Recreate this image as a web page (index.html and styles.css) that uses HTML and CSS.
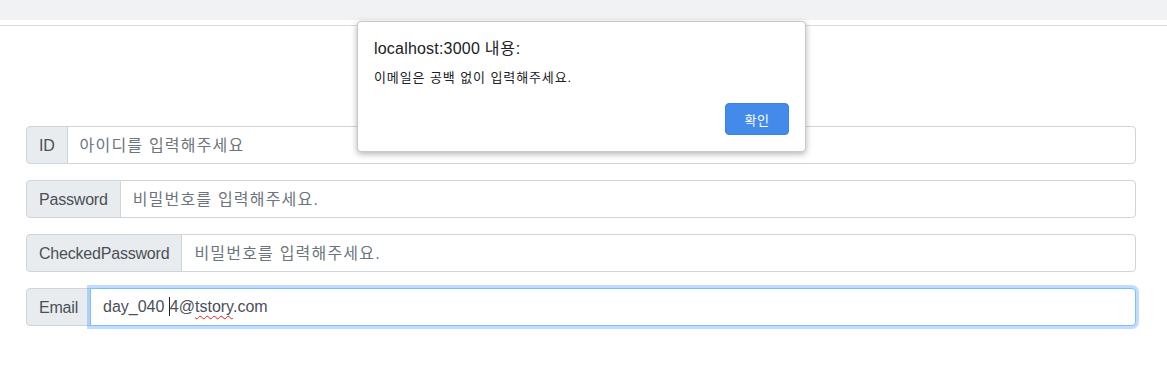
FILE: index.html
```html
<!DOCTYPE html>
<html lang="ko">
<head>
<meta charset="utf-8">
<title>Sign up</title>
<link rel="stylesheet" href="styles.css">
</head>
<body>
<div class="topbar"></div>
<div class="rule"></div>
<main class="form">
  <div class="input-group">
    <span class="prepend">ID</span>
    <input class="control" type="text" placeholder="아이디를 입력해주세요">
  </div>
  <div class="input-group">
    <span class="prepend">Password</span>
    <input class="control" type="password" placeholder="비밀번호를 입력해주세요.">
  </div>
  <div class="input-group">
    <span class="prepend">CheckedPassword</span>
    <input class="control" type="password" placeholder="비밀번호를 입력해주세요.">
  </div>
  <div class="input-group">
    <span class="prepend">Email</span>
    <div class="control focused">day_040 <span class="caret"></span>4@<span class="spell">tstory</span>.com</div>
  </div>
</main>
<div class="dialog" role="alertdialog">
  <div class="dialog-title">localhost:3000 <span class="ko">내용:</span></div>
  <div class="dialog-msg">이메일은 공백 없이 입력해주세요.</div>
  <div class="dialog-actions"><button class="dialog-btn">확인</button></div>
</div>
</body>
</html>
```
FILE: styles.css
```css
* { box-sizing: border-box; }
html, body { margin: 0; padding: 0; background: #fff; }
body {
  font-family: "Liberation Sans", "Noto Sans CJK KR", sans-serif;
  font-size: 16px;
  color: #495057;
  width: 1167px;
  height: 373px;
  overflow: hidden;
  position: relative;
}
.topbar { height: 20px; background: #f1f2f4; }
.rule { height: 6px; border-bottom: 1px solid #dadada; }
.form {
  margin: 100px 0 0 26px;
  width: 1110px;
  display: flex;
  flex-direction: column;
  gap: 16px;
}
.input-group { display: flex; height: 38px; }
.prepend {
  display: flex;
  align-items: center;
  padding: 7px 12px 5px;
  line-height: 24px;
  background: #e9ecef;
  border: 1px solid #ced4da;
  border-radius: 4px 0 0 4px;
  color: #495057;
  white-space: nowrap;
  letter-spacing: -0.2px;
}
.control {
  flex: 1;
  margin-left: -1px;
  padding: 7px 12px 5px;
  line-height: 24px;
  font: inherit;
  color: #495057;
  background: #fff;
  border: 1px solid #ced4da;
  border-radius: 0 4px 4px 0;
  outline: none;
}
.control::placeholder { color: #6c757d; opacity: 1; letter-spacing: 1.2px; }
.focused {
  position: relative;
  z-index: 2;
  border-color: #80bdff;
  box-shadow: 0 0 0 3px rgba(0, 123, 255, 0.25);
  white-space: pre;
  padding-top: 8px;
  padding-bottom: 4px;
}
.caret {
  display: inline-block;
  width: 1px;
  height: 19px;
  background: #222;
  vertical-align: -4px;
}
.spell {
  text-decoration: underline wavy #e02020;
  text-decoration-thickness: 1px;
  text-underline-offset: 3px;
}
.dialog {
  position: absolute;
  left: 357px;
  top: 21px;
  width: 449px;
  height: 131px;
  background: #fff;
  border: 1px solid #c8c8c8;
  border-radius: 4px;
  box-shadow: 0 2px 6px rgba(0, 0, 0, 0.3);
  padding: 16px 16px 16px 16px;
  display: flex;
  flex-direction: column;
  color: #202124;
}
.dialog-title { font-size: 16px; line-height: 22px; letter-spacing: 0.2px; }
.dialog-title .ko { letter-spacing: 0.8px; }
.dialog-msg { font-size: 13px; line-height: 18px; margin-top: 9px; letter-spacing: 0.9px; }
.dialog-actions { margin-top: auto; display: flex; justify-content: flex-end; }
.dialog-btn {
  width: 64px;
  height: 32px;
  border: 1px solid #3b82e6;
  border-radius: 4px;
  background: #448aeb;
  color: #fff;
  font-family: "Liberation Sans", "Noto Sans CJK KR", sans-serif;
  font-size: 13px;
  padding: 0;
  letter-spacing: 0.5px;
}
```
